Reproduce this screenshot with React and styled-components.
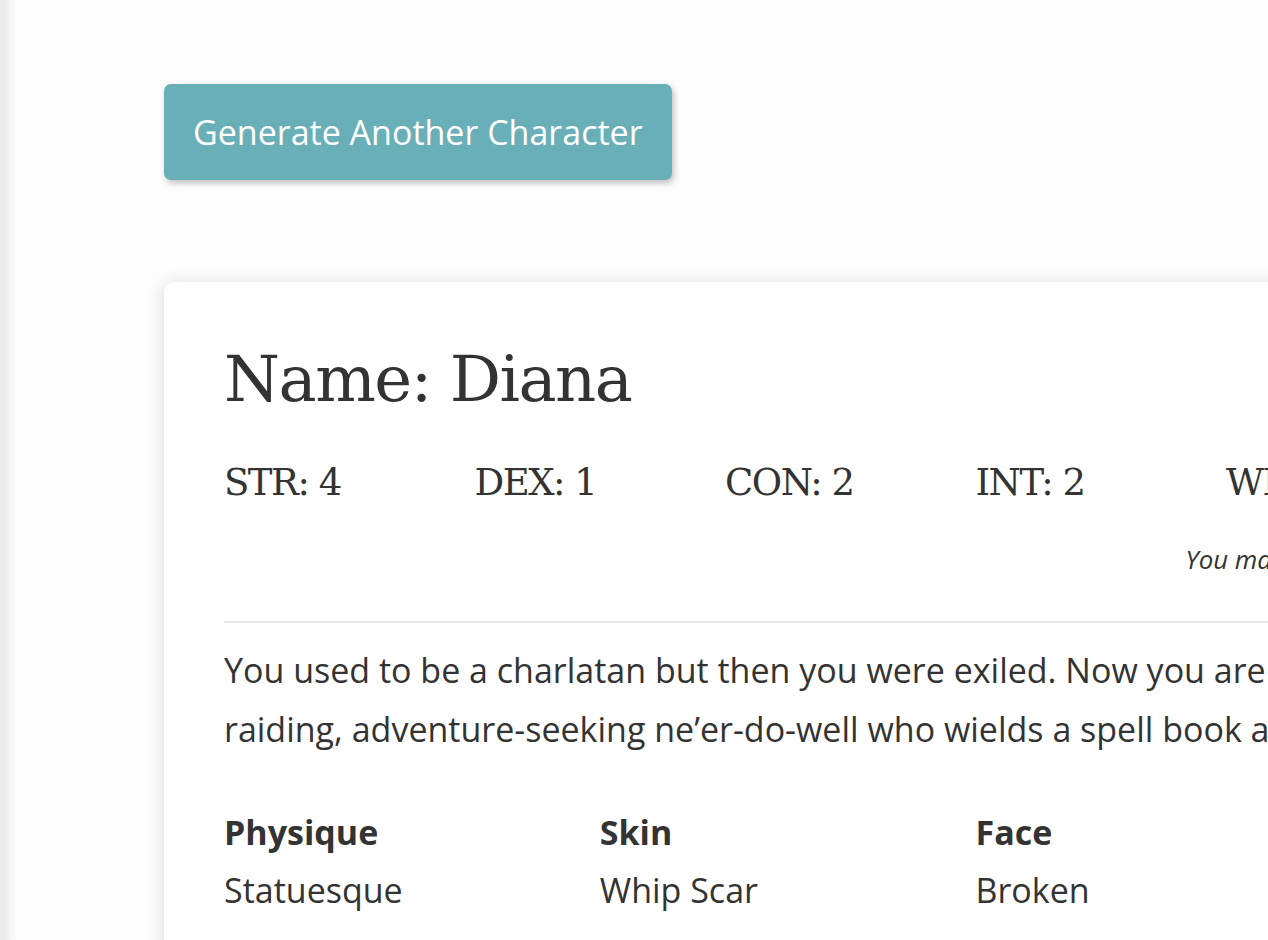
import React from 'react';
import styled, { createGlobalStyle } from 'styled-components';

const GlobalStyle = createGlobalStyle`
  html, body {
    margin: 0;
    padding: 0;
    background: #fff;
    overflow: hidden;
  }
`;

const stats = [
  ['STR', 4],
  ['DEX', 1],
  ['CON', 2],
  ['INT', 2],
  ['WIS', 3],
  ['CHA', 1],
];

const traits = [
  ['Physique', 'Statuesque'],
  ['Skin', 'Whip Scar'],
  ['Face', 'Broken'],
  ['Hair', 'Braided'],
];

const App = () => {
  return (
    <Page>
      <GlobalStyle />
      <Button>Generate Another Character</Button>
      <Card>
        <Title>Name: Diana</Title>
        <Stats>
          {stats.map(([label, value]) => (
            <Stat key={label}>{label}: {value}</Stat>
          ))}
        </Stats>
        <Note>You may swap any two of your stats if you wish.</Note>
        <Divider />
        <Story>
          You used to be a charlatan but then you were exiled. Now you are a
          grave-robbing, tomb-raiding, adventure-seeking ne’er-do-well who
          wields a spell book and a rusty dagger.
        </Story>
        <Traits>
          {traits.map(([label, value]) => (
            <Trait key={label}>
              <TraitLabel>{label}</TraitLabel>
              <TraitValue>{value}</TraitValue>
            </Trait>
          ))}
        </Traits>
      </Card>
    </Page>
  );
};

export default App;

const Page = styled.div`
  min-height: 940px;
  box-sizing: border-box;
  padding: 84px 0 0 164px;
  background: linear-gradient(to right, #eeeeee 0, #ececec 5px, #f6f6f6 11px, #fdfdfd 18px, #fdfdfd 100%);
  font-family: "Open Sans", "Noto Sans", sans-serif;
  color: #333;
`;

const Button = styled.button`
  display: block;
  height: 96px;
  padding: 0 29px;
  border: none;
  border-radius: 7px;
  background: #69afb8;
  color: #fff;
  font-family: "Open Sans", "Noto Sans", sans-serif;
  font-size: 34px;
  box-shadow: 2px 3px 6px rgba(0, 0, 0, 0.25);
  cursor: pointer;
`;

const Card = styled.div`
  margin-top: 102px;
  width: 1503px;
  padding: 52px 60px 60px;
  background: #fff;
  border-radius: 10px;
  box-shadow: 0 2px 18px rgba(0, 0, 0, 0.15);
`;

const Title = styled.h1`
  margin: 0;
  font-family: "DejaVu Serif", serif;
  font-weight: normal;
  font-size: 64px;
  letter-spacing: -1.5px;
  line-height: 90px;
`;

const Stats = styled.div`
  display: grid;
  grid-template-columns: repeat(6, 1fr);
  margin-top: 34px;
`;

const Stat = styled.div`
  font-family: "DejaVu Serif", serif;
  font-size: 37px;
  letter-spacing: -1.5px;
  line-height: 50px;
`;

const Note = styled.div`
  margin-top: 31px;
  text-align: right;
  font-style: italic;
  font-size: 25.8px;
  line-height: 40px;
`;

const Divider = styled.hr`
  margin: 42px 0 0;
  border: none;
  border-top: 2px solid #e8e8e8;
`;

const Story = styled.p`
  margin: 18px 0 0;
  font-size: 34px;
  line-height: 59px;
`;

const Traits = styled.div`
  display: grid;
  grid-template-columns: repeat(4, 1fr);
  margin-top: 44px;
`;

const Trait = styled.div`
  display: flex;
  flex-direction: column;
  font-size: 34px;
  line-height: 58px;
`;

const TraitLabel = styled.div`
  font-weight: bold;
`;

const TraitValue = styled.div``;
